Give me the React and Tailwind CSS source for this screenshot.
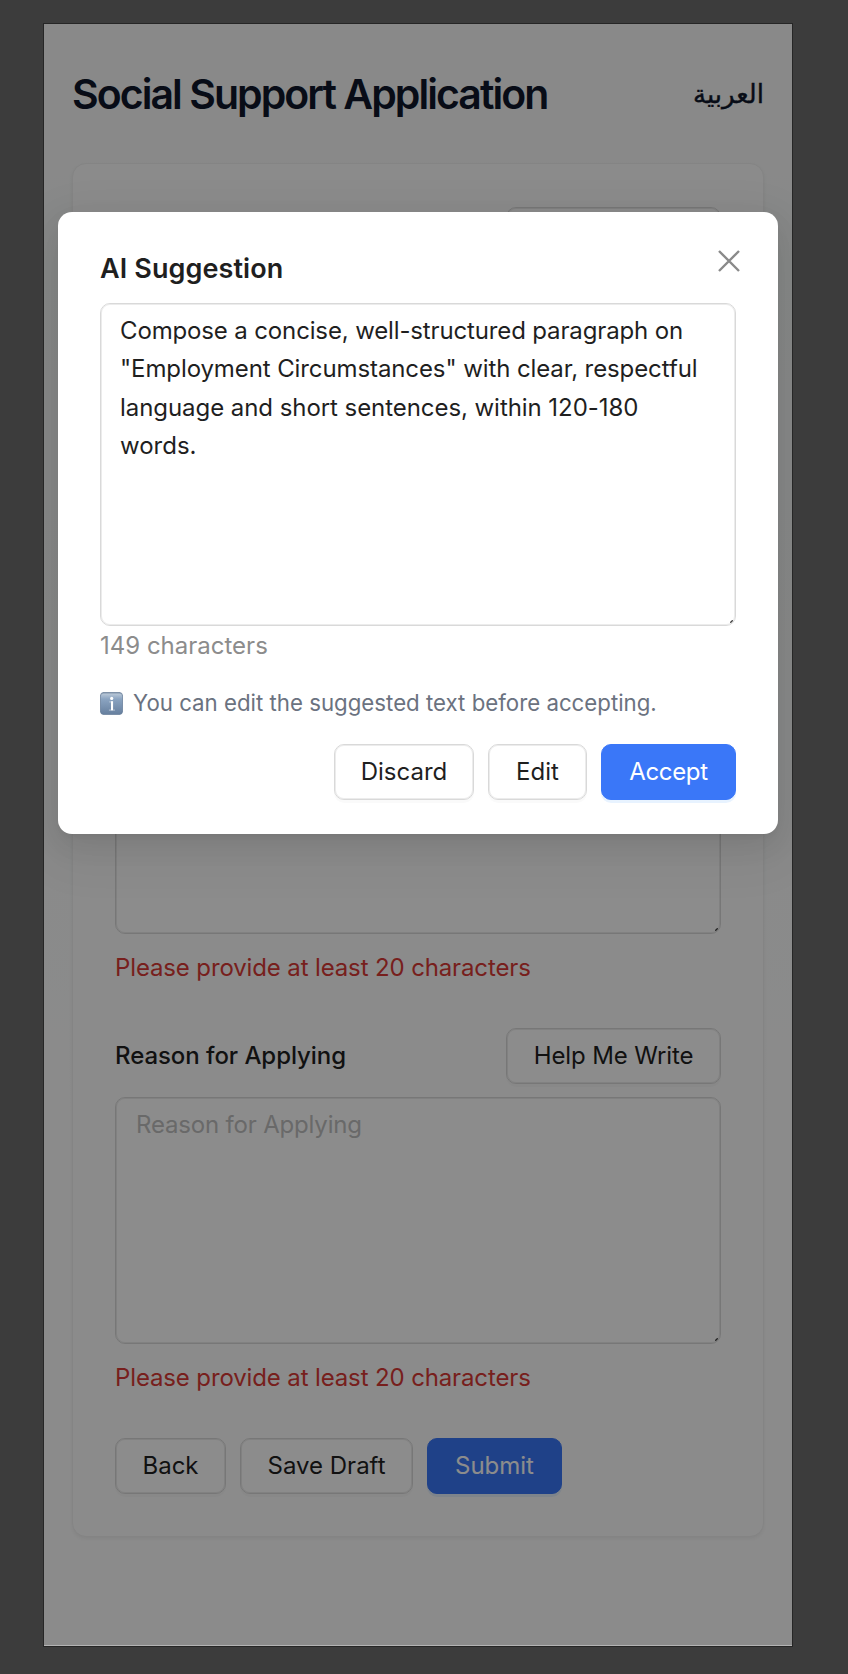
function ResizeGrip() {
  return (
    <svg className="absolute right-[2px] bottom-[2px] h-[3px] w-[3px]" viewBox="0 0 3 3" aria-hidden="true">
      <path d="M0.3 2.7L2.7 0.3" stroke="#3f3f3f" strokeWidth="1.3" />
    </svg>
  );
}

function Button({ children, className = "", primary = false }) {
  const tone = primary
    ? "border-[#3a77f8] bg-[#3a77f8] text-white shadow-[0_3px_0_rgba(5,125,255,0.09)]"
    : "border-[#d9d9d9] bg-white text-[#1f1f1f] shadow-[0_3px_0_rgba(0,0,0,0.02),inset_0_0_0_1px_#ececec]";
  return (
    <button
      type="button"
      className={`flex h-14 shrink-0 items-center justify-center rounded-[10px] border text-[24px] leading-[38px] whitespace-nowrap ${tone} ${className}`}
    >
      {children}
    </button>
  );
}

function Field({ label }) {
  return (
    <div>
      <div className="flex h-14 items-center justify-between">
        <span className="text-[24px] leading-[38px] font-medium tracking-[-0.06px] text-[#1f1f1f]">{label}</span>
        <Button className="w-[215px] tracking-[-0.12px]">Help Me Write</Button>
      </div>
      <div className="relative mt-[13px] h-[247px] rounded-[10px] border border-[#d9d9d9] bg-white px-[20px] pt-[8px] shadow-[inset_0_0_0_1px_#ececec]">
        <span className="text-[24px] leading-[38px] tracking-[-0.18px] text-[#bfbfbf]">{label}</span>
        <ResizeGrip />
      </div>
      <p className="mt-[15px] h-[38px] text-[24px] leading-[38px] tracking-[-0.13px] text-[#d93a36]">
        Please provide at least 20 characters
      </p>
    </div>
  );
}

function InfoBadge() {
  return (
    <svg className="h-[23px] w-[23px]" viewBox="0 0 23 23" aria-hidden="true">
      <defs>
        <linearGradient id="badge" x1="0" y1="0" x2="0" y2="1">
          <stop offset="0" stopColor="#77899f" />
          <stop offset="0.08" stopColor="#b4c4d5" />
          <stop offset="0.3" stopColor="#8ba4c1" />
          <stop offset="1" stopColor="#667f9e" />
        </linearGradient>
      </defs>
      <rect x="0.4" y="0.4" width="22.2" height="22.2" rx="3.6" fill="url(#badge)" stroke="#667c98" strokeWidth="0.8" />
      <circle cx="11.7" cy="6.4" r="1.6" fill="#fff" />
      <path d="M9.3 9.8H12.6V18M8.9 18.1H15" fill="none" stroke="#fff" strokeWidth="1.2" opacity="0.4" />
      <path d="M12 9.3V18.3" stroke="#fff" strokeWidth="2" />
    </svg>
  );
}

function SuggestionModal() {
  return (
    <section
      role="dialog"
      className="absolute top-[188px] left-[14px] h-[622px] w-[720px] rounded-[14px] bg-white px-[42px] pt-[35px] shadow-[0_10px_28px_0_rgba(0,0,0,0.08),0_5px_10px_-7px_rgba(0,0,0,0.12),0_16px_49px_14px_rgba(0,0,0,0.05)]"
    >
      <div className="flex h-[56px] items-start justify-between">
        <h2 className="pt-[1px] text-[27px] leading-[42px] font-semibold tracking-[0.1px] text-[#1f1f1f]">AI Suggestion</h2>
        <button type="button" aria-label="Close" className="mt-[2px] mr-[-5px]">
          <svg className="h-6 w-6" viewBox="0 0 24 24">
            <path d="M2 2L22 22M22 2L2 22" stroke="#8a8a8a" strokeWidth="2.4" />
          </svg>
        </button>
      </div>
      <div className="relative h-[323px] rounded-[10px] border border-[#d9d9d9] px-[19px] pt-[7.7px] text-[24px] leading-[38.5px] whitespace-nowrap text-[#1f1f1f] shadow-[inset_0_0_0_1px_#ececec]">
        <p className="tracking-[-0.14px]">Compose a concise, well-structured paragraph on</p>
        <p className="tracking-[-0.1px]">"Employment Circumstances" with clear, respectful</p>
        <p className="tracking-[-0.06px]">language and short sentences, within 120-180</p>
        <p>words.</p>
        <ResizeGrip />
      </div>
      <p className="mt-px text-[24px] leading-[38px] text-[#8c8c8c]">149 characters</p>
      <div className="mt-[20px] flex h-[36px] items-center gap-[10px]">
        <InfoBadge />
        <span className="text-[22.25px] leading-[36px] whitespace-nowrap text-[#6b7280]">
          You can edit the suggested text before accepting.
        </span>
      </div>
      <div className="mt-[22.5px] flex justify-end gap-[14px]">
        <Button className="w-[140px]">Discard</Button>
        <Button className="w-[99px]">Edit</Button>
        <Button primary className="w-[135px] tracking-[-0.35px]">Accept</Button>
      </div>
    </section>
  );
}

export default function App() {
  return (
    <div className="h-[1674px] w-[848px] overflow-hidden bg-[#3c3c3c] pt-[23px] pl-[43px] font-['Inter','DejaVu_Sans',sans-serif]">
      <div className="relative h-[1624px] w-[750px] overflow-hidden border border-[#262626] bg-white">
        <div className="h-full bg-[linear-gradient(to_bottom,#f9f9f9_0px,#fafafa_120px,#f6f9f8_240px,#fbfcfc_850px,#fefefe_1100px)] px-[28px] pt-[42px]">
          <header className="flex h-[56px] items-center justify-between">
            <h1 className="text-[41px] leading-[56px] font-semibold tracking-[-1.95px] whitespace-nowrap text-[#0f172a]">
              Social Support Application
            </h1>
            <span
              lang="ar"
              dir="rtl"
              className="mb-[1px] text-[26px] leading-[40px] text-[#0f172a] [-webkit-text-stroke:0.4px_#0f172a]"
            >
              العربية
            </span>
          </header>
          <main className="mt-[41px] h-[1374px] rounded-[14px] border border-[#f0f0f0] bg-[#fdfdfd] px-[42px] pt-[43px] shadow-[0_2px_4px_rgba(0,0,0,0.06)]">
            <div className="flex flex-col gap-[41.7px]">
              <Field label="Current Financial Situation" />
              <Field label="Employment Circumstances" />
              <Field label="Reason for Applying" />
            </div>
            <div className="mt-[41px] flex gap-[14px]">
              <Button className="w-[111px]">Back</Button>
              <Button className="w-[173px]">Save Draft</Button>
              <Button primary className="w-[135px]">Submit</Button>
            </div>
          </main>
        </div>
        <div className="absolute inset-0 border-b border-[#b4b4b4] bg-black/45 bg-clip-padding" />
        <SuggestionModal />
      </div>
    </div>
  );
}
